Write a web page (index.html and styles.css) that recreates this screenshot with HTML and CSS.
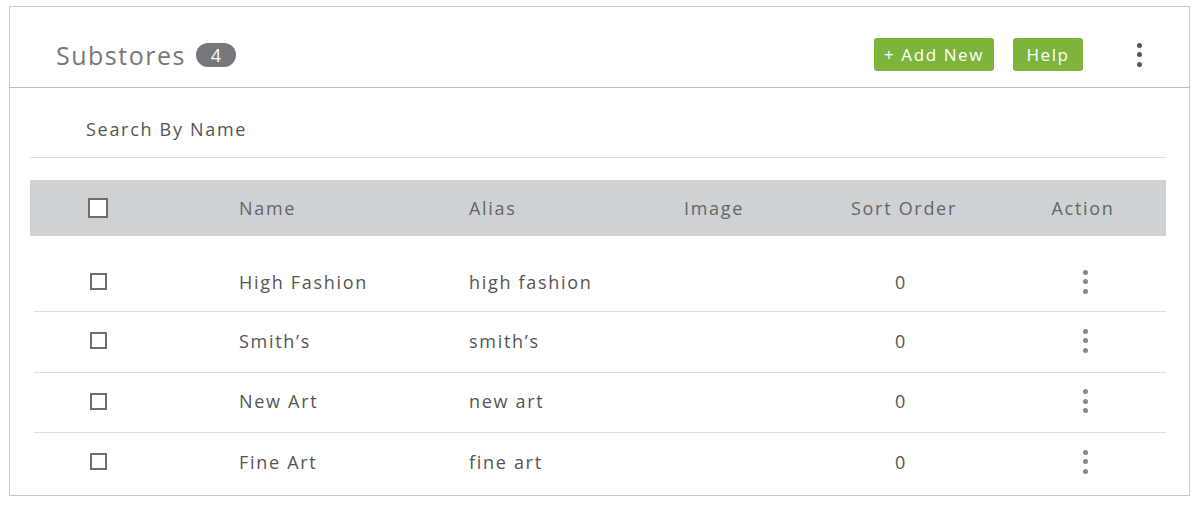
FILE: index.html
```html
<!DOCTYPE html>
<html>
<head>
<meta charset="utf-8">
<link rel="stylesheet" href="styles.css">
</head>
<body>
<div class="card">
  <div class="head">
    <div class="title">Substores <span class="badge">4</span></div>
    <div class="tools">
      <button class="btn add">+ Add New</button>
      <button class="btn help">Help</button>
      <span class="kebab dark"><i></i><i></i><i></i></span>
    </div>
  </div>
  <div class="body">
    <div class="search">Search By Name</div>
    <div class="thead">
      <div class="c-check"><span class="box big"></span></div>
      <div>Name</div>
      <div>Alias</div>
      <div>Image</div>
      <div class="center">Sort Order</div>
      <div class="center">Action</div>
    </div>
    <div class="rows">
      <div class="row">
        <div class="c-check"><span class="box"></span></div>
        <div>High Fashion</div>
        <div>high fashion</div>
        <div></div>
        <div class="center">0</div>
        <div class="act"><span class="kebab"><i></i><i></i><i></i></span></div>
      </div>
      <div class="row">
        <div class="c-check"><span class="box"></span></div>
        <div>Smith’s</div>
        <div>smith’s</div>
        <div></div>
        <div class="center">0</div>
        <div class="act"><span class="kebab"><i></i><i></i><i></i></span></div>
      </div>
      <div class="row">
        <div class="c-check"><span class="box"></span></div>
        <div>New Art</div>
        <div>new art</div>
        <div></div>
        <div class="center">0</div>
        <div class="act"><span class="kebab"><i></i><i></i><i></i></span></div>
      </div>
      <div class="row">
        <div class="c-check"><span class="box"></span></div>
        <div>Fine Art</div>
        <div>fine art</div>
        <div></div>
        <div class="center">0</div>
        <div class="act"><span class="kebab"><i></i><i></i><i></i></span></div>
      </div>
    </div>
  </div>
</div>
</body>
</html>
```

FILE: styles.css
```css
* { box-sizing: border-box; }
html, body { margin: 0; padding: 0; background: #fff; }
body {
  font-family: "Open Sans", "Liberation Sans", sans-serif;
  color: #555;
  padding: 6px 10px 0 9px;
}
.card {
  width: 1181px;
  height: 490px;
  border: 1px solid #c8c8c8;
}
.head {
  height: 81px;
  border-bottom: 1px solid #bdbdbd;
  display: flex;
  align-items: center;
  padding: 15px 40px 0 46px;
  justify-content: space-between;
}
.title {
  font-size: 25px;
  color: #777;
  display: flex;
  align-items: center;
  gap: 10px;
  letter-spacing: 1.5px;
}
.badge {
  display: inline-flex;
  align-items: center;
  justify-content: center;
  width: 40px;
  height: 24px;
  border-radius: 12px;
  background: #75777a;
  color: #fff;
  font-size: 18px;
  letter-spacing: 0;
}
.tools {
  display: flex;
  align-items: center;
}
.btn {
  font-family: inherit;
  height: 33px;
  border: 0;
  border-radius: 3px;
  background: #7db53c;
  color: #fff;
  font-size: 17px;
  letter-spacing: 1.6px;
  padding: 0;
}
.add { width: 120px; }
.help { width: 70px; margin-left: 19px; }
.kebab {
  display: flex;
  flex-direction: column;
  align-items: center;
  gap: 4.5px;
  width: 20px;
}
.kebab i {
  display: block;
  width: 5px;
  height: 5px;
  border-radius: 50%;
  background: #888;
}
.kebab.dark { margin-left: 46px; }
.kebab.dark i { background: #555; }

.body {
  padding: 0 23px 0 20px;
}
.search {
  padding: 30px 0 17px 56px;
  line-height: 22px;
  font-size: 18px;
  letter-spacing: 1.7px;
  color: #555;
  border-bottom: 1px solid #dcdcdc;
}
.thead {
  margin-top: 22px;
  height: 56px;
  background: #ced2d5;
  display: grid;
  grid-template-columns: 209px 230px 215px 124px 192px 166px;
  align-items: center;
  font-size: 18px;
  letter-spacing: 1.7px;
  color: #666;
}
.center { text-align: center; }
.c-check { padding-left: 58px; display: flex; align-items: center; }
.box {
  display: block;
  width: 17px;
  height: 17px;
  border: 2px solid #6e6e6e;
  background: #fff;
}
.box.big { width: 20px; height: 20px; }
.rows {
  margin: 16px 0 0 4px;
}
.row {
  height: 60px;
  display: grid;
  grid-template-columns: 205px 230px 215px 121px 192px 169px;
  align-items: center;
  font-size: 18px;
  letter-spacing: 1.7px;
  color: #555;
  border-bottom: 1px solid #dcdcdc;
}
.row + .row { padding-bottom: 3px; }
.row:nth-child(2) { height: 61px; }
.row:last-child { border-bottom: 0; }
.row .c-check { padding-left: 56px; }
.act {
  display: flex;
  justify-content: center;
  align-items: center;
  padding-left: 8px;
}
```
